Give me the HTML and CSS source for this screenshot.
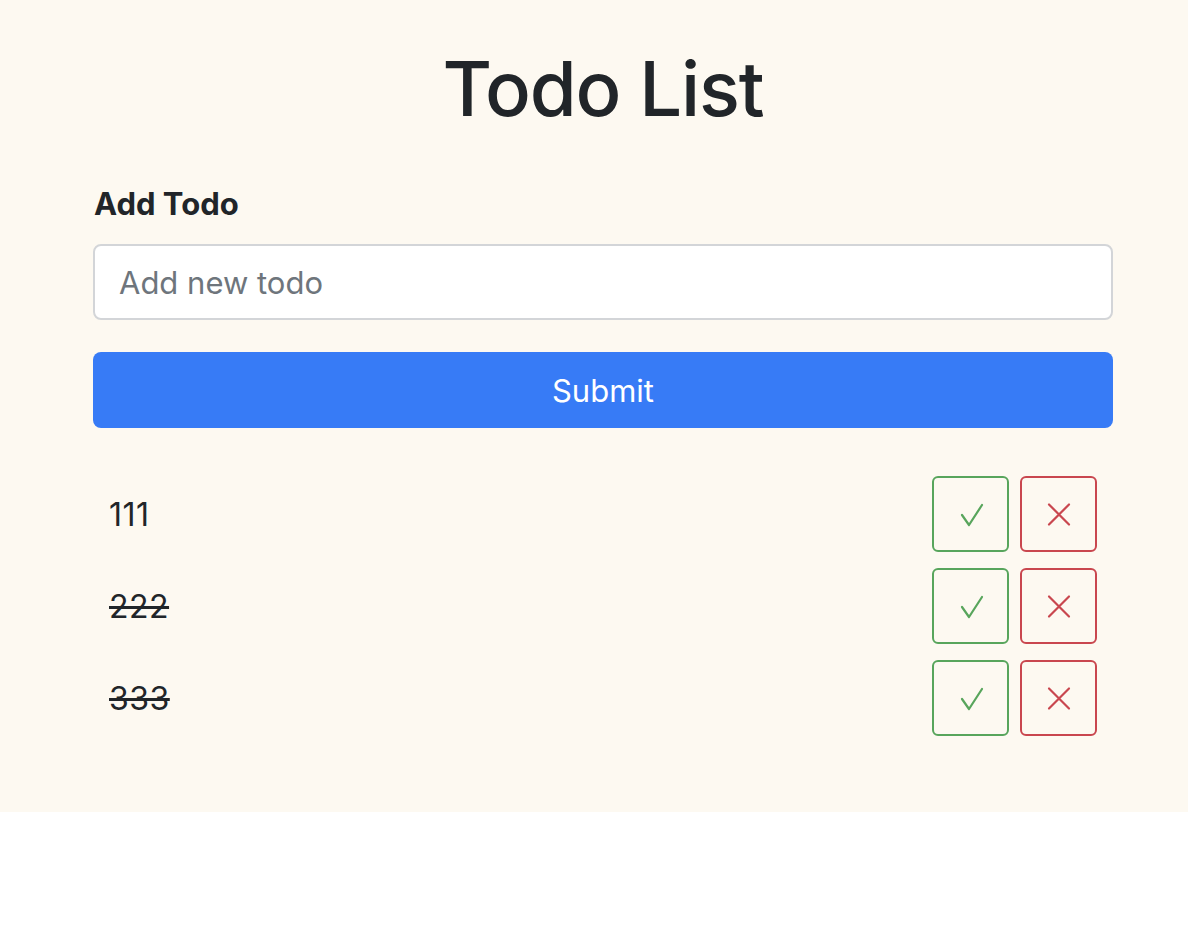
FILE: index.html
```html
<!DOCTYPE html>
<html lang="en">
<head>
<meta charset="utf-8">
<title>Todo List</title>
<link rel="stylesheet" href="styles.css">
</head>
<body>
<div class="page">
  <div class="container">
    <h1 class="title">Todo List</h1>
    <form class="add-form">
      <label class="label" for="todo">Add Todo</label>
      <input class="input" id="todo" type="text" placeholder="Add new todo">
      <button class="submit" type="button">Submit</button>
    </form>
    <ul class="list">
      <li class="item">
        <span class="text">111</span>
        <div class="actions">
          <button class="btn btn-done" type="button"><svg viewBox="0 0 28 28"><path d="M5 15 L12 25 L25 5" fill="none" stroke="currentColor" stroke-width="2.2" stroke-linecap="round" stroke-linejoin="round"/></svg></button>
          <button class="btn btn-del" type="button"><svg viewBox="0 0 28 28"><path d="M4 4.5 L24 24.5 M24 4.5 L4 24.5" fill="none" stroke="currentColor" stroke-width="2.2" stroke-linecap="round"/></svg></button>
        </div>
      </li>
      <li class="item">
        <span class="text done">222</span>
        <div class="actions">
          <button class="btn btn-done" type="button"><svg viewBox="0 0 28 28"><path d="M5 15 L12 25 L25 5" fill="none" stroke="currentColor" stroke-width="2.2" stroke-linecap="round" stroke-linejoin="round"/></svg></button>
          <button class="btn btn-del" type="button"><svg viewBox="0 0 28 28"><path d="M4 4.5 L24 24.5 M24 4.5 L4 24.5" fill="none" stroke="currentColor" stroke-width="2.2" stroke-linecap="round"/></svg></button>
        </div>
      </li>
      <li class="item">
        <span class="text done">333</span>
        <div class="actions">
          <button class="btn btn-done" type="button"><svg viewBox="0 0 28 28"><path d="M5 15 L12 25 L25 5" fill="none" stroke="currentColor" stroke-width="2.2" stroke-linecap="round" stroke-linejoin="round"/></svg></button>
          <button class="btn btn-del" type="button"><svg viewBox="0 0 28 28"><path d="M4 4.5 L24 24.5 M24 4.5 L4 24.5" fill="none" stroke="currentColor" stroke-width="2.2" stroke-linecap="round"/></svg></button>
        </div>
      </li>
    </ul>
  </div>
</div>
</body>
</html>
```
FILE: styles.css
```css
html, body {
  margin: 0;
  padding: 0;
  background: #ffffff;
}
body {
  font-family: Inter, "Noto Sans", "Liberation Sans", sans-serif;
  color: #212529;
}
.page {
  background: #fdf9f1;
  padding: 40px 0 76px;
}
.container {
  width: 1020px;
  margin-left: 93px;
}
.title {
  margin: 0 0 44px;
  text-align: center;
  font-size: 76px;
  font-weight: 500;
  line-height: 96px;
  letter-spacing: -1.2px;
}
.add-form {
  display: flex;
  flex-direction: column;
}
.label {
  font-size: 31px;
  font-weight: 700;
  line-height: 48px;
  margin-bottom: 16px;
  margin-left: 1px;
}
.input {
  box-sizing: border-box;
  height: 76px;
  width: 100%;
  border: 2px solid #d3d5d8;
  border-radius: 8px;
  background: #fff;
  padding: 0 24px;
  font-family: inherit;
  font-size: 31px;
  color: #495057;
  outline: none;
}
.input::placeholder {
  color: #6e757c;
}
.submit {
  margin-top: 32px;
  height: 76px;
  width: 100%;
  border: none;
  border-radius: 8px;
  background: #377bf6;
  color: #fff;
  font-family: inherit;
  font-size: 31px;
  padding: 0;
}
.list {
  list-style: none;
  margin: 48px 0 0;
  padding: 0;
  display: flex;
  flex-direction: column;
  gap: 16px;
}
.item {
  display: flex;
  align-items: center;
  justify-content: space-between;
  padding: 0 16px 0 16px;
}
.text {
  font-size: 32px;
  letter-spacing: 0.5px;
}
.text.done {
  text-decoration: line-through;
  text-decoration-thickness: 2.5px;
}
.actions {
  display: flex;
  gap: 11px;
}
.btn {
  box-sizing: border-box;
  width: 77px;
  height: 76px;
  border-radius: 6px;
  background: transparent;
  padding: 0;
  display: flex;
  align-items: center;
  justify-content: center;
}
.btn svg {
  width: 28px;
  height: 28px;
}
.btn-done {
  border: 2px solid #58a55c;
  color: #58a55c;
}
.btn-del {
  border: 2px solid #c9474f;
  color: #c9474f;
}
```
